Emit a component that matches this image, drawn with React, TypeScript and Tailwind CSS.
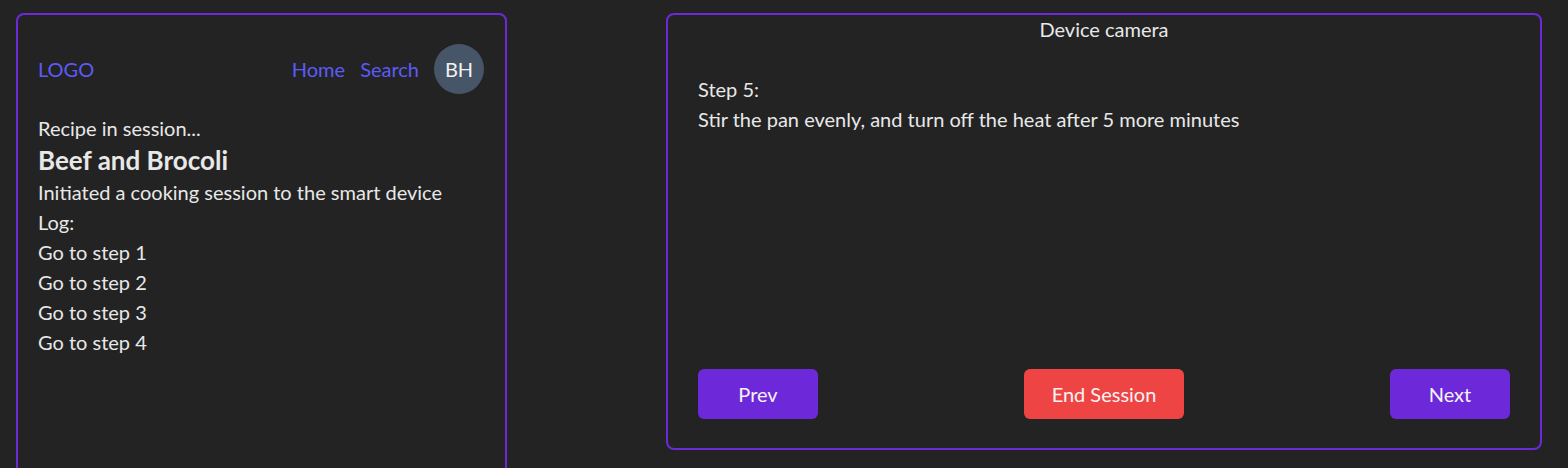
import React from "react";

const font = { fontFamily: "Lato, 'Open Sans', sans-serif" };

function Header() {
  return (
    <div className="flex items-center justify-between">
      <span className="text-[#5b5bf8]">LOGO</span>
      <div className="flex items-center gap-[15px]">
        <a className="text-[#5b5bf8]">Home</a>
        <a className="text-[#5b5bf8]">Search</a>
        <div className="w-[50px] h-[50px] rounded-full bg-[#475569] flex items-center justify-center text-[#f1f1f1]">
          BH
        </div>
      </div>
    </div>
  );
}

function SessionCard() {
  const log = ["Go to step 1", "Go to step 2", "Go to step 3", "Go to step 4"];
  return (
    <div className="w-[491px] h-[470px] shrink-0 rounded-lg border-2 border-[#6d28d9] pl-5 pr-[21px] pt-[29px]">
      <Header />
      <div className="mt-[19px]">
        <p>Recipe in session...</p>
        <h2 className="text-[26px] leading-[34px] font-bold">Beef and Brocoli</h2>
        <p>Initiated a cooking session to the smart device</p>
        <p>Log:</p>
        {log.map((l) => (
          <p key={l}>{l}</p>
        ))}
      </div>
    </div>
  );
}

function CameraCard() {
  return (
    <div className="w-[876px] h-[437px] shrink-0 rounded-lg border-2 border-[#6d28d9] flex flex-col px-[30px] pb-[29px]">
      <p className="text-center -mt-px">Device camera</p>
      <div className="mt-[30px] flex-1">
        <p>Step 5:</p>
        <p>Stir the pan evenly, and turn off the heat after 5 more minutes</p>
      </div>
      <div className="flex items-center justify-between">
        <button className="w-[120px] h-[50px] rounded-md bg-[#6d28d9] text-[#f4f4f4]">Prev</button>
        <button className="w-[160px] h-[50px] rounded-md bg-[#ef4444] text-[#f4f4f4]">End Session</button>
        <button className="w-[120px] h-[50px] rounded-md bg-[#6d28d9] text-[#f4f4f4]">Next</button>
      </div>
    </div>
  );
}

export default function App() {
  return (
    <div className="min-h-screen h-[468px] overflow-hidden bg-[#232323] text-[#e8e8e8] text-[20px] leading-[30px]" style={font}>
      <div className="flex justify-between pl-4 pr-[26px] pt-[13px]">
        <SessionCard />
        <CameraCard />
      </div>
    </div>
  );
}
